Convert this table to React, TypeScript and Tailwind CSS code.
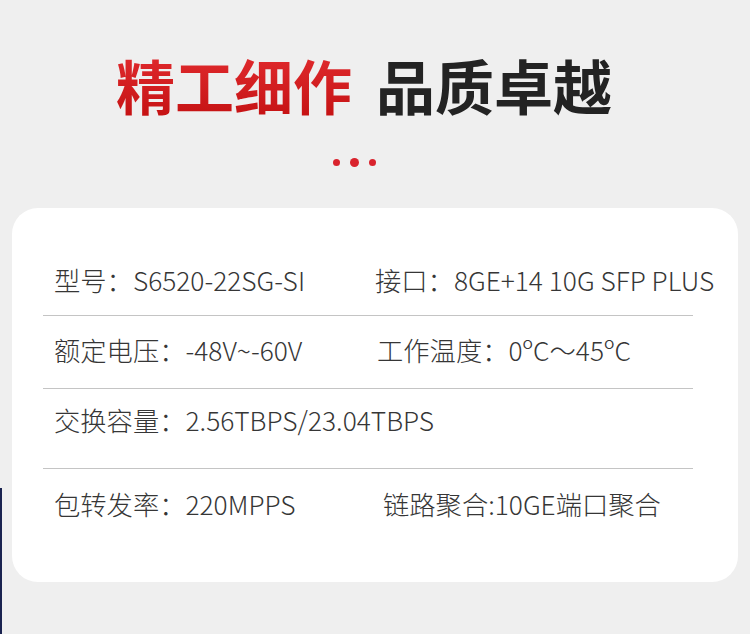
import React from "react";

const font = { fontFamily: '"Noto Sans CJK SC", "Noto Sans", sans-serif' };

export default function App() {
  return (
    <div className="relative w-[750px] h-[637px] bg-white overflow-hidden" style={font}>
      <div className="h-[634px] bg-[#efefef] flex flex-col items-center">
        <h1 className="mt-[55px] text-[59px] leading-[60px] font-bold whitespace-nowrap ml-[-22px]">
          <span className="bg-gradient-to-b from-[#e52d31] to-[#c10c0d] bg-clip-text text-transparent">精工细作</span>
          <span className="inline-block w-[24px]"></span>
          <span className="text-[#232323]">品质卓越</span>
        </h1>
        <div className="mt-[43px] flex items-center gap-[10px] ml-[-42px]">
          <span className="block w-[7px] h-[7px] rounded-full bg-[#d9232d]"></span>
          <span className="block w-[9px] h-[9px] rounded-full bg-[#d9232d]"></span>
          <span className="block w-[7px] h-[7px] rounded-full bg-[#d9232d]"></span>
        </div>
        <div className="mt-[41px] w-[726px] h-[374px] bg-white rounded-[26px] text-[#363636] text-[26.3px] leading-[26px] font-light">
          <div className="ml-[31px] w-[650px] h-[108px] pt-[59px] pl-[11px] border-b border-[#c4c4c4] flex whitespace-nowrap">
            <div className="w-[321px] shrink-0">型号：S6520-22SG-SI</div>
            <div className="shrink-0">接口：8GE+14 10G SFP PLUS</div>
          </div>
          <div className="ml-[31px] w-[650px] h-[73px] pt-[21px] pl-[11px] border-b border-[#c4c4c4] flex whitespace-nowrap">
            <div className="w-[323px] shrink-0">额定电压：-48V~-60V</div>
            <div className="shrink-0">工作温度：0ºC～45ºC</div>
          </div>
          <div className="ml-[31px] w-[650px] h-[80px] pt-[18px] pl-[11px] border-b border-[#c4c4c4] flex whitespace-nowrap">
            <div>交换容量：2.56TBPS/23.04TBPS</div>
          </div>
          <div className="ml-[31px] w-[650px] pt-[22px] pl-[11px] flex whitespace-nowrap">
            <div className="w-[329px] shrink-0">包转发率：220MPPS</div>
            <div className="shrink-0">链路聚合:10GE端口聚合</div>
          </div>
        </div>
      </div>
      <div className="absolute left-0 top-[488px] w-[2px] h-[146px] bg-[#1a2350]"></div>
    </div>
  );
}
